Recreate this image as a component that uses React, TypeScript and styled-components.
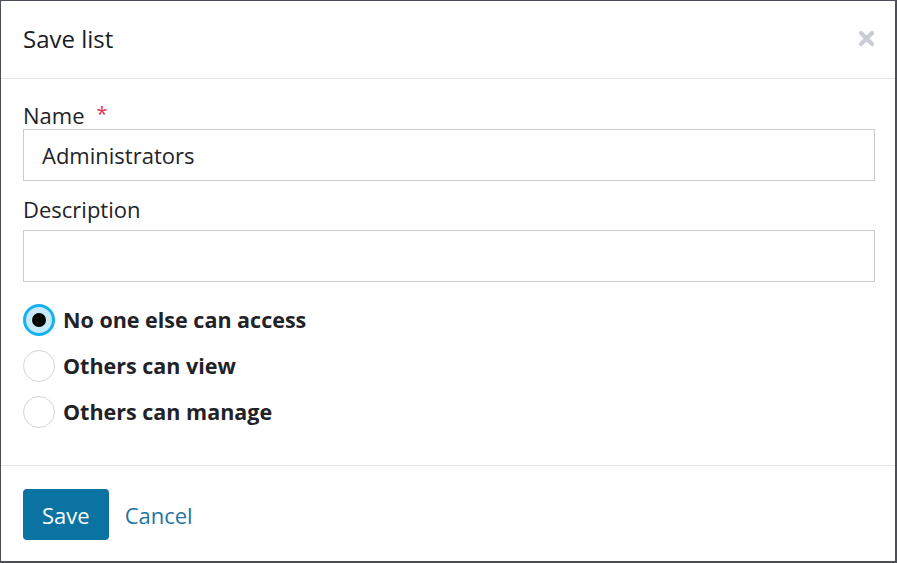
import React, { useState } from "react";
import styled, { createGlobalStyle } from "styled-components";

const Global = createGlobalStyle`
  html, body { margin: 0; padding: 0; background: #fff; }
  body { font-family: "Open Sans", Lato, "Noto Sans", sans-serif; color: #1f2328; }
  * { box-sizing: border-box; }
`;

const Dialog = styled.div`
  width: 897px;
  height: 563px;
  border-style: solid;
  border-color: #4b5058;
  border-width: 1px 2px 2px 1px;
  display: flex;
  flex-direction: column;
  background: #fff;
`;

const Header = styled.div`
  height: 78px;
  flex: none;
  border-bottom: 1px solid #e3e3e3;
  display: flex;
  align-items: center;
  justify-content: space-between;
  padding: 0 20px 2px 22px;
`;

const Title = styled.h1`
  margin: 0;
  font-size: 24px;
  line-height: 28px;
  font-weight: 500;
  color: #1a1e23;
`;

const CloseButton = styled.button`
  border: 0;
  background: none;
  padding: 0;
  width: 18px;
  height: 18px;
  display: flex;
  align-items: center;
  justify-content: center;
  cursor: pointer;
`;

const Body = styled.div`
  flex: 1;
  padding: 22px 20px 0 22px;
  display: flex;
  flex-direction: column;
`;

const Field = styled.div<{ $gapBelow: number }>`
  display: flex;
  flex-direction: column;
  margin-bottom: ${(p) => p.$gapBelow}px;
`;

const Label = styled.label<{ $gapBelow: number }>`
  font-size: 22px;
  line-height: 26px;
  color: #1f2328;
  margin-bottom: ${(p) => p.$gapBelow}px;
`;

const Required = styled.span`
  color: #e8304a;
  margin-left: 12px;
  font-size: 20px;
  vertical-align: 3px;
`;

const Input = styled.input`
  height: 52px;
  width: 100%;
  border: 1px solid #cccccc;
  border-radius: 0;
  padding: 0 18px;
  font-family: inherit;
  font-size: 22px;
  color: #1f2328;
  outline: none;
`;

const RadioGroup = styled.div`
  display: flex;
  flex-direction: column;
  gap: 14px;
`;

const RadioRow = styled.label`
  display: flex;
  align-items: center;
  gap: 8px;
  cursor: pointer;
  font-size: 21.5px;
  line-height: 26px;
  font-weight: 700;
  color: #1f2328;
`;

const RadioCircle = styled.span<{ $checked: boolean }>`
  width: 32px;
  height: 32px;
  border-radius: 50%;
  flex: none;
  display: flex;
  align-items: center;
  justify-content: center;
  border: ${(p) => (p.$checked ? "3px solid #19b0ee" : "1px solid #d4d4d4")};
  background: ${(p) => (p.$checked ? "#c6e9fb" : "#fff")};
  &::after {
    content: "";
    display: ${(p) => (p.$checked ? "block" : "none")};
    width: 14px;
    height: 14px;
    border-radius: 50%;
    background: #000;
  }
`;

const Footer = styled.div`
  height: 96px;
  flex: none;
  border-top: 1px solid #e3e3e3;
  display: flex;
  align-items: center;
  gap: 16px;
  padding: 2px 22px 0;
`;

const PrimaryButton = styled.button`
  height: 51px;
  padding: 0 19px;
  background: #0b73a1;
  color: #fff;
  border: 0;
  border-radius: 4px;
  font-family: inherit;
  font-size: 22px;
  font-weight: 500;
  cursor: pointer;
`;

const LinkButton = styled.button`
  background: none;
  border: 0;
  padding: 0;
  font-family: inherit;
  font-size: 22px;
  color: #1e74a5;
  cursor: pointer;
`;

const options = ["No one else can access", "Others can view", "Others can manage"];

export default function App() {
  const [choice, setChoice] = useState(0);
  return (
    <>
      <Global />
      <Dialog>
        <Header>
          <Title>Save list</Title>
          <CloseButton aria-label="Close">
            <svg width="17" height="17" viewBox="0 0 17 17">
              <path d="M3 3 L14 14 M14 3 L3 14" stroke="#c9cdd3" strokeWidth="4.2" strokeLinecap="round" />
            </svg>
          </CloseButton>
        </Header>
        <Body>
          <Field $gapBelow={15}>
            <Label $gapBelow={1}>
              Name<Required>*</Required>
            </Label>
            <Input defaultValue="Administrators" />
          </Field>
          <Field $gapBelow={22}>
            <Label $gapBelow={8}>Description</Label>
            <Input defaultValue="" />
          </Field>
          <RadioGroup>
            {options.map((o, i) => (
              <RadioRow key={o} onClick={() => setChoice(i)}>
                <RadioCircle $checked={choice === i} />
                {o}
              </RadioRow>
            ))}
          </RadioGroup>
        </Body>
        <Footer>
          <PrimaryButton>Save</PrimaryButton>
          <LinkButton>Cancel</LinkButton>
        </Footer>
      </Dialog>
    </>
  );
}
